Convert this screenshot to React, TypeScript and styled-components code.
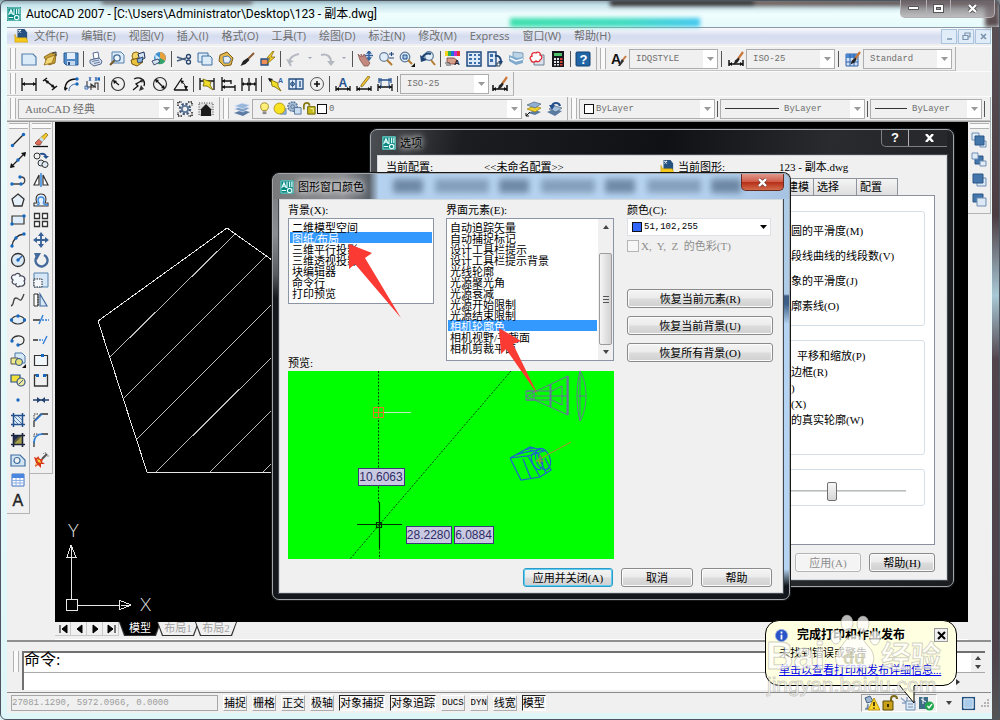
import React from "react";
import styled, { createGlobalStyle, css } from "styled-components";

const song = `"Liberation Serif", "Noto Sans CJK SC", serif`;
const ui = `"Open Sans", "Noto Sans CJK SC", sans-serif`;
const title = `Roboto, "Noto Sans CJK SC", sans-serif`;
const mono = `"Liberation Mono", "Noto Sans CJK SC", monospace`;

const GlobalStyle = createGlobalStyle`
  * { box-sizing: border-box; }
  html, body { margin: 0; padding: 0; }
  body { font: 11px/16px ${song}; color: #000; background: #dff3f6; overflow-x: hidden; }
  button, select, input { font: inherit; color: inherit; margin: 0; padding: 0; }
  button { border: 0; background: none; display: flex; align-items: center; justify-content: center; white-space: nowrap; }
  svg { display: block; flex: none; }
`;

/* ---------- icons ---------- */

const N = "#1c2f55";
const B = "#2f62a8";
const dot = (x: number, y: number) => <circle cx={x} cy={y} r="1.7" fill="#1769c0" key={`${x}-${y}`} />;
const K = "#111";
const line = (d: string, stroke = K, w = 1.3) => <path d={d} stroke={stroke} strokeWidth={w} fill="none" />;
const arrowEnds = (y: number) => <path d={`M1 ${y}l3-2v4zM15 ${y}l-3-2v4z`} fill={K} />;
const brush = <><path d="M15 1l-5 7" stroke="#c9783a" strokeWidth="2.2" /><path d="M10.500 6.500L7 9.500l-1.500 4 4-2 2-3z" fill="#222" /></>;
const glyphA = (x: number, y: number, s: number, fill = K) => (
  <text x={x} y={y} fontSize={s} fontFamily="Liberation Sans, sans-serif" fontWeight="700" fill={fill}>A</text>
);

const icons: Record<string, React.ReactNode> = {
  app: <><rect width="16" height="16" fill="#0c8a83" /><path d="M1 1h14v14H1z" fill="none" stroke="#bfe6e2" strokeWidth=".8" /><path d="M2 9l2.500-6L7 9M3 7h3M8 2v7M11 2v6M13.500 2v6M8.500 12a2.500 2.500 0 1 0 5 0 2.500 2.500 0 1 0-5 0M2 12h5" stroke="#e9fffd" strokeWidth="1.300" fill="none" /></>,
  doc: <><path d="M4 0h8l3 4v8H4z" fill="#26507f" /><path d="M5 1l3 3M8 1L5 4" stroke="#fff" strokeWidth="1.200" /><path d="M1 6l2 4h11l2 5H1z" fill="#f4c91c" stroke="#c79500" strokeWidth=".6" /></>,
  fresh: <path d="M1 3h11l3 3v8H1z" fill="#dcebf8" stroke="#5481ae" strokeWidth="1.200" />,
  open: <><path d="M2 6L9 2l5 1-1 9-6 2z" fill="#caa23a" stroke="#7c5b12" strokeWidth=".8" /><path d="M2 14l3-7 8-3-3 8z" fill="#f3d675" stroke="#8d6a18" strokeWidth=".8" /><path d="M10 2l4-1v4" stroke="#333" fill="none" /></>,
  save: <><path d="M1 2h14v12H3l-2-2z" fill="#4f8ac6" stroke="#2b5c93" /><path d="M4 2h8v6H4z" fill="#e3eefa" /><path d="M4 10h8v4H4z" fill="#c3d8ee" /><path d="M5 11h2v3H5z" fill="#234d80" /></>,
  print: <><path d="M5 2l5-1 1 6-5 1z" fill="#fff" stroke="#4a5f86" strokeWidth=".9" /><path d="M2 9l9-2 3 3-1 3-7 2-4-3z" fill="#d4deec" stroke="#4a5f86" strokeWidth=".9" /><path d="M4 10.500l7-1.500M6 12.500l6-1.500" stroke="#4e6794" strokeWidth=".8" /></>,
  preview: <><path d="M3 1h9l3 3v8H3z" fill="#dcebf8" stroke="#5481ae" /><circle cx="8" cy="7" r="3.200" fill="#eef6fd" stroke="#446c98" strokeWidth="1.300" /><path d="M5.500 9.500L1 14" stroke="#7a5a2a" strokeWidth="2" /></>,
  publish: <><circle cx="6" cy="5" r="4" fill="#f4d56a" stroke="#8a6a10" /><path d="M8 3l6-2 1 6-5 3z" fill="#d7e6f6" stroke={N} /><path d="M1 9l7-2 5 4-6 4-5-2z" fill="#e9c33b" stroke="#7b5b12" /><path d="M7 8l6-2-1 5-4 1z" fill="#88b3df" stroke={N} strokeWidth=".8" /></>,
  globe: <><circle cx="9" cy="7" r="6" fill="#3d8fcf" /><path d="M9 1a6 6 0 0 1 5 9L9 7z" fill="#e9a13b" /><path d="M9 7l5 3a6 6 0 0 1-7 3z" fill="#35a56a" /><path d="M4 3l5 4-4 4z" fill="#cfe7fa" /><path d="M1 10l6-2 2 3-6 3z" fill="#d6e2f0" stroke={N} strokeWidth=".8" /></>,
  cut: <><path d="M1 6l9 3M1 10l9-3" stroke="#47617f" strokeWidth="1.500" /><circle cx="12.500" cy="5.500" r="2" fill="none" stroke="#26446d" strokeWidth="1.300" /><circle cx="12.500" cy="11" r="2" fill="none" stroke="#26446d" strokeWidth="1.300" /></>,
  copy: <><path d="M1 2h10v9H1z" fill="#dcebf8" stroke="#3e6fa0" /><path d="M5 5h8l2 2v7H5z" fill="#dcebf8" stroke="#3e6fa0" /></>,
  paste: <><path d="M2 4l7-3 6 6-2 7-7 1-5-5z" fill="#e2b74b" stroke="#7e5b16" /><path d="M5 6l5-1 3 3-2 4-5 0z" fill="#e4eefa" stroke={B} strokeWidth=".8" /></>,
  match: <><path d="M15 2L8 9" stroke="#8a5a34" strokeWidth="2" /><path d="M8.500 7l2 2-4 4-5 2 2.500-5z" fill="#222" /></>,
  bedit: <><path d="M1 8h7v6H1z" fill="#f08c55" stroke="#1e4d86" strokeWidth="1.300" /><path d="M13 0L7 7h3l-3 6 8-7h-4l3-6z" fill="#f7d02e" stroke="#7d5d00" strokeWidth=".7" /></>,
  undo: <><path d="M6 15C3 11 4 5 14 3" stroke="#b4b9c1" strokeWidth="2" fill="none" /><path d="M1 8l3 5 5-3z" fill="#b4b9c1" /></>,
  redo: <><path d="M2 4c6-2 10 2 10 7" stroke="#b4b9c1" strokeWidth="2" fill="none" /><path d="M8 10h8l-4 5z" fill="#b4b9c1" /></>,
  tiny: <path d="M6 6h4l-2 2z" fill="#9aa3b5" />,
  pan: <><path d="M1 3l3 3 0-3 2 3 1-3 2 4 4 5-2 3H7L3 9z" fill="#c48a80" stroke="#8c5a52" strokeWidth=".8" /><path d="M12 0v9M8 4.500h8M12 0l-1.500 2h3zM12 9l-1.500-2h3z" stroke="#33629e" strokeWidth="1.400" /></>,
  zoom: <><circle cx="6" cy="6" r="4.300" fill="#e0edf9" stroke="#667f9c" strokeWidth="1.200" /><path d="M9 9l5 5" stroke="#b0792c" strokeWidth="2" /><path d="M11 3h5M13.500 1v4M11 7h5" stroke="#224a80" strokeWidth="1.200" /></>,
  zoomwin: <><circle cx="6" cy="6" r="4.800" fill="#e0edf9" stroke="#5b7796" strokeWidth="1.200" /><path d="M4 4h4v4H4z" fill="#a8c8e8" stroke="#20508c" /><path d="M9 9l4 4" stroke="#b0792c" strokeWidth="2" /><path d="M16 12v4h-4z" fill={K} /></>,
  zoomprev: <><circle cx="9" cy="5" r="4.300" fill="#e0edf9" stroke="#5b7796" strokeWidth="1.200" /><path d="M11 9l4 5" stroke="#b0792c" strokeWidth="2" /><path d="M2 7c2-4 6-5 9-4" stroke="#1e4476" strokeWidth="2.200" fill="none" /><path d="M0 4l1 7 6-2z" fill="#1e4476" /></>,
  props: <><path d="M0 0h3v5H0z" fill="#f2d21a" /><path d="M3 0h3v5H3z" fill="#35b34a" /><path d="M6 0h3v5H6z" fill="#1e6fe0" /><path d="M9 0h3v5H9z" fill="#c22bd0" /><path d="M12 0h3v5h-3z" fill="#e0312a" /><path d="M2 7h7l4 3-2 3H6L2 11z" fill="#d79f8c" stroke="#75453a" strokeWidth=".8" /><path d="M0 12h5M1 14h5" stroke="#555" />{glyphA(9, 14, 8, "#223")}</>,
  dcenter: <><path d="M1 1h14v14H1z" fill="#dce9f7" stroke="#214a80" strokeWidth="1.500" /><path d="M3 3h3v2H3zM3 7h3v2H3zM3 11h3v2H3zM8 3h2v2H8zM12 3h2v2h-2zM8 7h2v2H8zM12 7h2v2h-2zM8 11h2v2H8zM12 11h2v2h-2z" fill="#3b6dab" /></>,
  palettes: <><path d="M1 1h8v14H1z" fill="#dce9f7" stroke="#214a80" strokeWidth="1.400" /><path d="M3 3h3v3H3zM3 8h3v3H3z" fill="#3b6dab" /><path d="M8 5c4-1 6 2 6 6" stroke="#1e4476" strokeWidth="2" fill="none" /><path d="M11 10h5l-2 4z" fill="#1e4476" /><path d="M10 12h3v3h-3z" fill="#fff" stroke="#345" /></>,
  sheets: <><path d="M5 1l10 1v7L5 8z" fill="#bcd4e8" stroke="#6c8dae" strokeWidth=".8" /><path d="M1 4l8 3 6-1v6l-7 2-7-4z" fill="#7fa9cd" /><path d="M2 7l6 3 7-2" stroke="#f2f8fd" strokeWidth="1.500" fill="none" /></>,
  markup: <><path d="M5 4h10v10H5z" fill="#d9e2ec" stroke="#6f8093" /><path d="M2 9c-2-2 0-4 1-4-1-3 2-4 4-3 2-2 5 0 4 2 3 1 2 4 0 5 0 2-3 2-4 1-2 2-5 1-5-1z" fill="#fff" stroke="#e2242c" strokeWidth="1.300" /></>,
  calc: <><path d="M2 0h12v16H2z" fill="#15171c" /><path d="M4 2h8v3H4z" fill="#4cc06a" /><path d="M4 7h2v2H4zM7 7h2v2H7zM4 10h2v2H4zM7 10h2v2H7zM4 13h2v1.500H4zM7 13h2v1.500H7z" fill="#e8e8e8" /><path d="M10 7h2.500v2H10zM10 10h2.500v2H10zM10 13h2.500v1.500H10z" fill="#d9443b" /></>,
  help: <><rect x="1" y="1" width="14" height="14" rx="1" fill="#1f65a8" stroke="#15406e" /><text x="4.500" y="13" fontSize="13" fontWeight="700" fontFamily="Liberation Sans, sans-serif" fill="#fff">?</text></>,
  textstyle: <>{glyphA(0, 13, 14)}<path d="M15 5l-4 5" stroke="#c9783a" strokeWidth="2" /><path d="M11 8l2 2-4 5-2 0z" fill="#333" /></>,
  dimstyle: <>{brush}{line("M1 9v6M15 9v6M1 13h14", K, 1.500)}{arrowEnds(13)}</>,
  tablestyle: <><path d="M1 3h12v12H1z" fill="#cfe1f6" stroke="#2f62a8" /><path d="M1 3h12v4H1z" fill="#4a86d0" /><path d="M5 3v12M9 3v12M1 11h12" stroke="#2f62a8" />{brush}</>,

  dlinear: <>{line("M1 2v13M15 2v13M1 8h14")}{arrowEnds(8)}</>,
  daligned: <>{line("M1 5l4-3M10 14l5-4M3 4l10 8", K, 1.500)}<path d="M3 4l4 1-2 3zM13 12l-4-1 2-3z" fill={K} /></>,
  darc: <>{line("M2 14C2 7 6 3 13 3")}{line("M6 15c0-4 2-7 8-7", "#3d6db0", 1)}{dot(14, 3)}{dot(14, 8)}<path d="M1 11l1 4 3-3z" fill={K} /></>,
  dord: <>{line("M3 5v6h9M7 14V8l4 3V7l3 0v7", "#333", 1.100)}<path d="M5 1l2 4M7 1L5 5M11 1l2 4M13 1l-2 4" stroke="#3d6db0" /><path d="M1 10h3v3H1z" fill="none" stroke="#3d6db0" />{dot(15, 3)}</>,
  dradius: <><circle cx="8" cy="8" r="6.500" fill="none" stroke="#333" strokeWidth="1.200" />{line("M4 5l5 4")}<path d="M3 4l4 1-3 3z" fill={K} /></>,
  djog: <>{line("M3 3c6-3 12 1 10 7M2 14l5-4-2-2 7-4")}<path d="M13 3l-4 1 2 3zM10 9l-2 6 5-2z" fill="#333" /></>,
  ddia: <><circle cx="8" cy="8" r="6.500" fill="none" stroke="#333" strokeWidth="1.200" />{line("M4 4l8 8")}<path d="M3 3l4 1-3 3zM13 13l-4-1 3-3z" fill={K} /></>,
  dang: <>{line("M1 14h14M1 14L9 2")}{line("M8 5c3 2 5 5 5 9", K, 1)}<path d="M7 4l4 1-2 3zM13 14l-2-4h4z" fill={K} /></>,
  quick: <>{line("M1 2v12M15 2v12M1 5h14")}<path d="M4 3l8 3-1 3 3 5-6-4-4 0 1-3z" fill="#f0dc2a" stroke="#6f6200" strokeWidth=".8" /></>,
  baseline: <>{line("M2 1v14M11 4v4M15 9v6M2 5h9M2 11h13")}<path d="M2 5l3-2v4zM2 11l3-2v4z" fill={K} /></>,
  cont: <>{line("M1 2v13M8 2v13M15 2v13M1 8h14")}<path d="M8 8l-2-2v4zM8 8l2-2v4zM1 8l2-2v4zM15 8l-2-2v4z" fill={K} /></>,
  leader: <>{line("M2 3l5 5h4")}<path d="M1 2l5 1-3 3z" fill={K} /><path d="M4 4l7 3v3l3 5-6-4-3-1z" fill="#f0dc2a" stroke="#6f6200" strokeWidth=".8" />{glyphA(11, 7, 7, B)}</>,
  tol: <><path d="M1 3h14v10H1z" fill="#dbe8f7" stroke="#234d80" strokeWidth="1.300" />{line("M8 3v10M12 5v6", "#234d80")}<circle cx="4.500" cy="8" r="1.800" fill="none" stroke="#234d80" />{line("M4.500 4.500v7M2 8h5", "#234d80", 0.8)}</>,
  center: <><circle cx="8" cy="8" r="6.500" fill="none" stroke="#555" />{line("M8 5v6M5 8h6", K, 1.600)}</>,
  dedit: <>{line("M1 10v5M15 10v5M1 13h14")}{arrowEnds(13)}{glyphA(3.500, 11, 12, "#24508d")}</>,
  dtedit: <>{line("M1 10v5M15 10v5M1 13h14")}{arrowEnds(13)}<path d="M14 1L7 10l-2 1 0-2 7-9z" fill="#f0c52d" stroke="#7a5b12" strokeWidth=".7" /></>,
  dupd: <>{line("M2 2v5M14 2v5M2 4h12", "#24508d")}{line("M1 8v7M15 8v7M1 11h14", K)}{arrowEnds(11)}{line("M4 2v10M12 2v10", "#24508d", 1)}</>,

  gear: <><path d="M1 5V1h4M11 1h4v4M15 11v4h-4M5 15H1v-4" fill="none" stroke="#222" strokeDasharray="1.500 1" strokeWidth="1.500" /><circle cx="8" cy="8" r="5" fill="none" stroke="#445a78" strokeWidth="2.500" strokeDasharray="2.200 1.700" /><circle cx="8" cy="8" r="4" fill="#5d7698" /><circle cx="8" cy="8" r="2.200" fill="#f0f0f0" /></>,
  home: <><path d="M1 2h14v12H1z" fill="#ddd" stroke="#777" strokeDasharray="1 1.500" strokeWidth="1.500" /><path d="M2 9l6-6 6 6h-1v6H3V9z" fill="#1a1a1a" /></>,
  layers: <><path d="M0 12l8-3 8 2-7 4z" fill="#5b7ba3" /><path d="M0 8l8-3 8 2-7 4z" fill="#7d9ec4" stroke="#eef" strokeWidth=".6" /><path d="M0 5l8-3 8 2-7 4z" fill="#9ab9da" stroke="#eef" strokeWidth=".6" /></>,
  bulb: <><path d="M8 2c5 0 5 5 2.500 8H5.500C3 7 3 2 8 2z" fill="#fff07a" stroke="#a08820" /><path d="M6 11h4v3H6z" fill="#8a8a8a" /></>,
  sun: <><path d="M9 8h6v6H9z" fill="#8fb3d8" stroke="#6b8eb5" /><circle cx="8" cy="8" r="5.800" fill="#f9e21f" stroke="#b19a12" /></>,
  snow: <><circle cx="6" cy="6" r="5" fill="#a7bbd2" stroke="#58779d" strokeDasharray="2 1" strokeWidth="1.500" /><circle cx="6" cy="6" r="2" fill="none" stroke="#58779d" /><path d="M8 7h7v7H8z" fill="#c9dcf0" stroke="#58779d" /></>,
  unlock: <><path d="M2 9V5a3 3 0 0 1 6 0" fill="none" stroke="#857710" strokeWidth="1.800" /><path d="M6 6h8v8H6z" fill="#c4b91f" stroke="#6f6508" /><path d="M9 8h3v4" stroke="#f9f3a0" fill="none" /></>,
  laycur: <><path d="M3 12l7-3 6 2-6 3z" fill="#5b7ba3" /><path d="M2 8l7-3 7 2-6 4z" fill="#f1cf2c" stroke="#9b8110" strokeWidth=".7" /><path d="M2 4l7-3 7 2-6 4z" fill="#8fb0d4" stroke="#456" strokeWidth=".6" /><path d="M1 15l4-4M1 15v-3M1 15h3" stroke={K} /></>,
  layprev: <><path d="M1 11l7-3 8 2-7 5z" fill="#5b7ba3" /><path d="M3 8l6-3 7 2-6 4z" fill="#a3c0df" stroke="#456" strokeWidth=".6" /><path d="M14 5c-1-4-7-4-8 0" stroke="#24508d" strokeWidth="2.200" fill="none" /><path d="M3 4h6l-3 5z" fill="#24508d" /></>,

  line: <>{line("M2 14L14 2", "#222", 1.300)}{dot(2.500, 13.500)}{dot(13.500, 2.500)}</>,
  xline: <>{line("M1 15L15 1", "#222", 1.300)}{dot(8, 8)}<path d="M0 16l1-5 4 4zM16 0l-5 1 4 4z" fill={K} /></>,
  pline: <>{line("M2 12h9c5 0 5-7 0-7", "#444", 1.300)}{dot(2, 12)}{dot(11, 12)}{dot(10, 5)}</>,
  polygon: <path d="M8 2l6 5-2 7H4L2 7z" fill="#e6f0f8" stroke="#333" strokeWidth="1.300" />,
  rect: <><path d="M2 4h12v8H2z" fill="#dfeefa" stroke="#333" strokeWidth="1.200" />{dot(2, 12)}{dot(14, 4)}</>,
  arc: <>{line("M2 14C3 7 7 3 14 2", "#333")}{dot(2, 14)}{dot(6, 6)}{dot(14, 2)}</>,
  circle: <><circle cx="8" cy="8" r="6.500" fill="#dceaf6" stroke="#333" strokeWidth="1.300" />{line("M8 8l4-4", B, 1.500)}{dot(8, 8)}</>,
  cloud: <path d="M3 8C0 6 2 2 5 3c2-3 6-1 5 1 4-1 6 3 4 5 2 3-1 6-4 5-2 2-5 0-4-2-3 1-5-2-3-4z" fill="#f3f8fc" stroke="#445" strokeWidth="1.200" />,
  spline: line("M1 14c4-1 1-8 5-8s4 7 8-4", "#444"),
  ellipse: <><ellipse cx="8" cy="8" rx="6.500" ry="4" fill="#e2eef8" stroke="#333" strokeWidth="1.200" />{dot(1.500, 8)}{dot(14.500, 8)}{dot(8, 4)}</>,
  earc: <>{line("M2 9C1 3 14 2 14 8c0 4-4 5-6 5", "#333")}{dot(2, 9)}{dot(8, 13)}</>,
  insert: <><path d="M5 1h7l3 3v7H5z" fill="#d7e8f7" stroke="#4b78a6" /><path d="M1 6h7v6H1z" fill="#f2ec8a" stroke="#555" /><circle cx="9" cy="10" r="3.500" fill="#e8e27a" stroke="#24508d" /><path d="M16 12v4h-4z" fill={K} /></>,
  block: <><path d="M1 3h9v7H1z" fill="#f2df3a" stroke="#24508d" strokeWidth="1.200" /><circle cx="11" cy="10" r="4" fill="#efe9a0" stroke="#3b5a80" strokeWidth="1.200" />{line("M9 12l4-4", "#3b5a80", 1)}</>,
  point: dot(8, 8),
  hatch: <><path d="M3 3h10v10H3z" fill="#dcebf8" /><path d="M3 7l6 6M3 3l10 10M7 3l6 6" stroke="#5481ae" /><path d="M3.500 1v14M12.500 1v14M1 3.500h14M1 12.500h14" stroke="#24508d" strokeWidth="1.500" /></>,
  gradient: <><path d="M3 3h10v10H3z" fill="#555a3c" /><path d="M13 3v10H3z" fill="#a8a04c" /><path d="M3 3h7l-7 7z" fill="#222b55" /><path d="M3.500 1v14M12.500 1v14M1 3.500h14M1 12.500h14" stroke="#1c2540" strokeWidth="1.600" /></>,
  region: <><path d="M1 3h9l5 5v6H1z" fill="#d3e5f5" stroke="#3e6fa0" strokeWidth="1.200" /><circle cx="7" cy="8.500" r="3" fill="#f0f0f0" stroke="#3e6fa0" strokeWidth="1.200" /></>,
  table: <><path d="M2 2h12v12H2z" fill="#fff" stroke="#3f72c0" /><path d="M2 2h12v4H2z" fill="#4a86e0" /><path d="M6 6v8M10 6v8M2 8.500h12M2 11h12" stroke="#8db1e2" /></>,
  mtext: <text x="2.500" y="14" fontSize="16" fontFamily="Liberation Sans, sans-serif" fill="#222" stroke="#222" strokeWidth=".4">A</text>,

  erase: <><path d="M13 1l2 2-6 7-3-3z" fill="#efc92e" stroke="#806410" strokeWidth=".7" /><path d="M6 7l3 3-2 3H4L2 11z" fill="#de6a58" stroke="#6b3b30" strokeWidth=".7" /><path d="M8 5l3 3-2 2-3-3z" fill="#c4def4" />{line("M0 14.500h15")}</>,
  copyobj: <><circle cx="4" cy="4" r="3" fill="none" stroke="#333" /><path d="M7 2c4-1 6 1 6 3" stroke="#24508d" strokeWidth="1.800" fill="none" /><path d="M10 4h6l-3 3z" fill="#24508d" /><circle cx="8" cy="11" r="3" fill="#dfeaf4" stroke="#333" /><circle cx="12" cy="12.500" r="3" fill="#dfeaf4" stroke="#333" /></>,
  mirror: <><path d="M6 3v10H1zM10 3v10h5z" fill="#fff" stroke="#333" strokeWidth="1.200" />{line("M8 1v14", "#3c8be0", 1.600)}</>,
  offset: <><path d="M1 14v-3h3c-2-4-1-9 4-9s6 5 4 9h3v3z" fill="#e8f1fa" stroke="#333" strokeWidth="1.100" />{line("M4 13c4 0 1-3 1-5 0-4 6-4 6 0 0 2-3 5 4 5", "#3c8be0", 1.400)}</>,
  array: <path d="M1.500 1.500h5v5h-5zM9.500 1.500h5v5h-5zM1.500 9.500h5v5h-5zM9.500 9.500h5v5h-5z" fill="#fff" stroke="#333" strokeWidth="1.300" />,
  move: <><path d="M8 2v12M2 8h12" stroke="#376197" strokeWidth="1.800" /><path d="M8 0l3 4H5zM8 16l3-4H5zM0 8l4-3v6zM16 8l-4-3v6z" fill="#376197" /></>,
  rotate: <><path d="M4 4.500A6 6 0 1 0 11 3" fill="none" stroke="#446a9c" strokeWidth="2.400" /><path d="M1 1h7L4 8z" fill="#446a9c" /></>,
  scale: <><path d="M1 1h14v14H1z" fill="#d6e8f8" stroke="#5481ae" /><path d="M1 7h8v8H1z" fill="#f4f8fc" stroke="#222" strokeDasharray="1.500 1" /></>,
  stretch: <><path d="M1 2h4v12H1z" fill="#fff" stroke="#333" /><path d="M7 2l7 12H7z" fill="#d6e8f8" stroke="#446a9c" strokeWidth="1.200" /><path d="M5 2v12" stroke="#222" strokeDasharray="1.500 1" /></>,
  trim: <>{line("M0 8h7")}{line("M6 12l4-9", "#2f7fd8", 1.400)}<path d="M9 8h7" stroke="#2f7fd8" strokeWidth="1.300" strokeDasharray="2 1" /></>,
  extend: <>{line("M0 8h5")}<path d="M6 8h4" stroke="#2f7fd8" strokeWidth="1.300" strokeDasharray="2 1" />{line("M10 12l4-8", "#2f7fd8", 1.400)}</>,
  breakpt: <><path d="M1.500 3.500h13v10h-13z" fill="#f2f7fb" stroke="#333" strokeWidth="1.200" /><path d="M8 2h3v3H8z" fill="#1769c0" /></>,
  breaks: <>{line("M4 3H1.500v11h13V3H12", "#333")}<path d="M3 2h3v3H3zM10 2h3v3h-3z" fill="#1769c0" /></>,
  join: <>{line("M0 8h16", "#24426f", 1.500)}<path d="M8 8L4 5v6zM8 8l4-3v6z" fill="#24426f" /></>,
  chamfer: <>{line("M1 15V9l7-7h7", "#333")}{line("M2 9l7-7", "#2f7fd8", 1.600)}<path d="M1 7V2h5" stroke="#333" strokeDasharray="1.500 1" fill="none" /></>,
  fillet: <>{line("M1 15V9M8 2h7", "#333")}{line("M1 11c0-6 3-9 9-9", "#2f7fd8", 1.600)}<path d="M1 5V2h4" stroke="#333" strokeDasharray="1.500 1" fill="none" /></>,
  explode: <><path d="M9 7l5-5" stroke="#555" strokeWidth="2.200" /><path d="M1 5l3 1 1-2 2 3 3 0-1 3 3 2-4 0 0 4-3-3-3 2 1-4z" fill="#d8391e" /><path d="M4 7l3 1 1 3-3-1zM2 12l2-1 0 2z" fill="#f9d12d" /><path d="M12 0l1 2M16 4l-2 0M10 1l1 1" stroke="#888" /></>,

  front1: <><path d="M1 1h7v7H1z" fill="#e2ecf6" stroke="#6f8fb3" /><path d="M9 9h6v6H9z" fill="#e2ecf6" stroke="#6f8fb3" /><path d="M4 4h9v9H4z" fill="#4576ab" stroke="#2b5788" /></>,
  front2: <><path d="M4 4h8v8H4z" fill="#4576ab" stroke="#2b5788" /><path d="M1 1h6v6H1zM9 9h6v5H9z" fill="#e2ecf6" stroke="#6f8fb3" /></>,
  front3: <><path d="M6 6h9v8H6z" fill="#dce8f4" stroke="#6f8fb3" /><path d="M2 2h10v9H2z" fill="#4576ab" stroke="#2b5788" /></>,
  front4: <><path d="M2 2h10v8H2z" fill="#4576ab" stroke="#2b5788" /><path d="M6 6h9v8H6z" fill="#dce8f4" stroke="#6f8fb3" /></>,

  warn: <><path d="M1 3l5-2 3 5-6 2zM4 9v5H1" fill="#9fb7d2" stroke="#43607f" /><path d="M10 3l6 12H4z" fill="#ffd52a" stroke="#a88300" strokeWidth=".8" /><path d="M10 7v4M10 12.500v1.200" stroke="#000" strokeWidth="1.400" /></>,
  lock: <><path d="M9 8V4a3 3 0 0 1 6 0" fill="none" stroke="#7c6a1a" strokeWidth="2" /><path d="M1 6h10v9H1z" fill="#c8a21a" stroke="#5c4a08" /><path d="M5 9h2v3H5z" fill="#3a2f05" /></>,
  plot: <><path d="M1 3l6 5M7 2v6M2 8h6" stroke="#8aa4c2" strokeWidth="1.500" /><path d="M6 6h9v9H6z" fill="#dce8f4" stroke="#6f8fb3" /><path d="M8 9h5M8 12h5" stroke="#6f8fb3" /></>,
  xref: <><path d="M1 2h9v12H1z" fill="#3c6c86" /><path d="M3 4l5 3M5 2v7" stroke="#fff" /><circle cx="11.500" cy="11" r="4.500" fill="#21a84d" /><path d="M9.500 11l1.500 2 3-4" stroke="#fff" strokeWidth="1.300" fill="none" /></>,
  square: <><path d="M1 1h14v14H1z" fill="#24507f" /><path d="M3 3h10v10H3z" fill="#a9cbe9" stroke="#e4f1fb" /></>,
  info: <><circle cx="8" cy="8" r="7.500" fill="#2a55c9" stroke="#8fa8df" /><path d="M8 3v2.500M8 7v6" stroke="#fff" strokeWidth="2.200" /></>,
};

const Icon = ({ name, size = 16 }: { name: string; size?: number }) => (
  <svg width={size} height={size} viewBox="0 0 16 16" aria-hidden="true">{icons[name]}</svg>
);

/* ---------- main window ---------- */

const Window = styled.div`
  position: relative;
  display: flex;
  flex-direction: column;
  min-height: 100vh;
  padding: 0 9px 7px 7px;
  overflow: hidden;
  background:
    linear-gradient(#5b5357, #4b3c42 30%, #a9c9d6 41%, #51444c 50%, #4d4249 90%, #555) right / 8px 100% no-repeat,
    linear-gradient(#eafcfd, #dff6f8);
  &::after {
    content: "";
    position: absolute;
    inset: 0;
    border: 1px solid #4b5560;
    border-radius: 6px;
    pointer-events: none;
  }
`;

const TitleBar = styled.header`
  display: flex;
  align-items: center;
  height: 27px;
  margin: 0 -9px 0 -7px;
  padding-left: 7px;
  gap: 5px;
  position: relative;
  font: 12px/16px ${title};
  background: linear-gradient(#89a3ab, #c6e2ea 5px, #effdfd 14px, #e6fbfc);
  > * { position: relative; z-index: 1; }
`;

const GlassSmear = styled.span`
  && {
    position: absolute;
    z-index: 0;
    inset: 0;
    overflow: hidden;
    filter: blur(2px);
    background:
      linear-gradient(90deg, #3fe0ad, #41dcc0 60%, #45c8ef) 63% 100% / 19% 9px no-repeat,
      linear-gradient(#5f5a5c, #5f5a5c) 12% 0 / 15% 4px no-repeat,
      linear-gradient(90deg, #2f292b, #2f292b 37%, #6b5a56 37%, #56494a) 100% 0 / 39% 6px no-repeat,
      linear-gradient(#6b6064, #574a4d) 100% 0 / 15px 100% no-repeat;
  }
`;

const TitleText = styled.h1`
  margin: 0;
  font: inherit;
`;

const Caption = styled.div`
  display: flex;
  margin: 0 5px auto auto;
  height: 18px;
  border: 1px solid #b4b0b4;
  border-top: 0;
  border-radius: 0 0 5px 5px;
  background: linear-gradient(#6a6064cc, #a39da0aa);
`;

const CaptionButton = styled.button<{ $w: number }>`
  width: ${(p) => p.$w}px;
  & + & { border-left: 1px solid #b4b0b4; }
`;

const MenuBar = styled.nav`
  display: flex;
  align-items: center;
  height: 17px;
  padding-left: 7px;
  background: linear-gradient(#fafbfe, #d4dcee 50%, #dfe4f4);
  border-top: 1px solid #8c98a4;
  font: 11px/16px ${ui};
  color: #6d6d6d;
`;

const MenuItem = styled.button`
  margin-left: 6px;
  margin-right: 7px;
`;

const MdiButton = styled.button`
  width: 16px;
  height: 15px;
  margin-left: 1px;
  border: 1px solid #a9c4dc;
  background: #e0edf8;
`;

const MdiGroup = styled.div`
  display: flex;
  margin-left: auto;
`;

const ToolRows = styled.div`
  background: #f0f0f0;
  padding-top: 2px;
  border-bottom: 1px solid #9a9a9a;
`;

const ToolRow = styled.div`
  display: flex;
  height: 25px;
  overflow: hidden;
  border-top: 1px solid #fbfbfb;
`;

const ToolBar = styled.div<{ $sep?: number }>`
  display: flex;
  align-items: center;
  padding: 0 3px 0 3px;
  border-right: 1px solid #b0b0b0;
  border-bottom: 1px solid #c4c4c4;
  --sep: ${(p) => p.$sep ?? 4}px;
`;

const Grip = styled.span<{ $flat?: boolean }>`
  flex: none;
  ${(p) =>
    p.$flat
      ? css`width: 19px; height: 6px; margin: 1px auto; border-width: 1px 0;`
      : css`width: 6px; height: 21px; margin-right: 2px; border-width: 0 1px;`}
  border-style: solid;
  border-color: #b2b2b2;
  background: #fafafa;
`;

const ToolButton = styled.button<{ $w?: number }>`
  flex: none;
  width: ${(p) => p.$w ?? 21}px;
  height: 20px;
`;

const Sep = styled.span`
  flex: none;
  width: var(--sep);
  height: 16px;
  background: linear-gradient(#555, #555) center / 1px 100% no-repeat;
`;

const ComboBox = styled.div<{ $w: number; $white?: boolean }>`
  display: flex;
  align-items: center;
  width: ${(p) => p.$w}px;
  height: ${(p) => (p.$white ? 18 : 20)}px;
  padding-left: 4px;
  border: 1px solid ${(p) => (p.$white ? "#dde1e6" : "#adadad")};
  background: ${(p) => (p.$white ? "#fff" : "#f0f0f0")};
  color: ${(p) => (p.$white ? "#000" : "#6f6f6f")};
  flex: none;
`;

const ComboSelect = styled.select<{ $mono?: boolean }>`
  flex: 1;
  min-width: 0;
  height: 100%;
  border: 0;
  padding-left: 2px;
  appearance: none;
  background: none;
  font: ${(p) => (p.$mono ? `9px/14px ${mono}` : `11px/16px ${song}`)};
`;

const Arrow = styled.span<{ $dark?: boolean }>`
  display: flex;
  align-items: center;
  justify-content: center;
  width: 14px;
  height: 100%;
  background: #fff;
  color: ${(p) => (p.$dark ? "#000" : "#9a9a9a")};
`;

const LinePreview = styled.span<{ $w: number }>`
  flex: none;
  width: ${(p) => p.$w}px;
  height: 1px;
  margin-right: 3px;
  background: #333;
`;

const Swatch = styled.span<{ $c: string }>`
  flex: none;
  width: 10px;
  height: 10px;
  border: 1px solid #111;
  background: ${(p) => p.$c};
`;

type ComboProps = { w: number; label: string; value: string; mono?: boolean; white?: boolean; children?: React.ReactNode };
const Combo = ({ w, label, value, mono: m, white, children }: ComboProps) => (
  <ComboBox $w={w} $white={white}>
    {children}
    <ComboSelect aria-label={label} $mono={m}><option>{value}</option></ComboSelect>
    <Arrow $dark={white}>
      <svg width="7" height="4" viewBox="0 0 7 4"><path d="M0 0h7L3.500 4z" fill="currentColor" /></svg>
    </Arrow>
  </ComboBox>
);

const Tools = ({ names }: { names: string[] }) => (
  <>
    {names.map((n, i) =>
      n === "|" ? <Sep key={i} /> : (
        <ToolButton key={i} aria-label={n} $w={n === "tiny" ? 13 : 21}><Icon name={n} /></ToolButton>
      )
    )}
  </>
);

const Body = styled.div`
  flex: 1;
  display: flex;
  background: #f0f0f0;
`;

const SideBar = styled.div`
  display: flex;
  align-items: flex-start;
  flex: none;
`;

const ToolColumn = styled.div`
  display: flex;
  flex-direction: column;
  align-items: center;
  width: 23px;
  padding-bottom: 3px;
  border: solid #b4b4b4;
  border-width: 0 1px 1px 0;
`;

const Workspace = styled.main`
  flex: 1;
  min-width: 0;
  display: flex;
  flex-direction: column;
  margin-left: 2px;
`;

const Canvas = styled.div`
  flex: 1;
  min-height: 500px;
  background: #000;
  overflow: hidden;
`;

const LayoutTabs = styled.div`
  display: flex;
  height: 18px;
  align-items: flex-start;
  border-bottom: 1px solid #fff;
`;

const NavButton = styled.button`
  width: 16px;
  height: 14px;
  border-right: 1px solid #c9c9c9;
  border-bottom: 1px solid #c9c9c9;
`;

const TabShape = styled.button<{ $on?: boolean }>`
  height: 14px;
  width: 42px;
  margin-right: -4px;
  padding: 0 1px 1px;
  background: #333;
  color: ${(p) => (p.$on ? "#fff" : "#a2a2a2")};
  clip-path: polygon(0 0, 100% 0, calc(100% - 5px) 100%, 5px 100%);
  > span {
    width: 100%;
    height: 100%;
    line-height: 13px;
    background: ${(p) => (p.$on ? "#000" : "#f0f0f0")};
    clip-path: polygon(0 0, 100% 0, calc(100% - 5px) 100%, 5px 100%);
  }
`;

const CommandPanel = styled.section`
  display: flex;
  height: 53px;
  padding: 9px 6px 2px 6px;
  gap: 1px;
  background: #f0f0f0;
  border-top: 2px solid #8f8f8f;
  border-bottom: 1px solid #8a8a8a;
`;

const CommandBox = styled.div`
  flex: 1;
  display: flex;
  flex-direction: column;
  border: solid #707070;
  border-width: 2px 0 0 2px;
  background: #fff;
`;

const CommandHistory = styled.div`
  display: flex;
  justify-content: space-between;
  height: 20px;
  border-bottom: 1px solid #a9a9a9;
  font: 16px/14px ${song};
`;

const CommandInput = styled.input`
  width: 100%;
  height: 17px;
  border: 0;
  outline: 0;
  background: transparent;
`;

const ScrollPair = styled.div`
  display: flex;
  flex-direction: column;
  justify-content: space-around;
  align-items: center;
  width: 14px;
  background: #f0f0f0;
`;

const InputRow = styled.div`
  display: flex;
  align-items: center;
`;

const ScrollEnd = styled.button`
  width: 30px;
  height: 17px;
  justify-content: flex-start;
  background: #f0f0f0;
`;

const StatusBar = styled.footer`
  display: flex;
  align-items: center;
  gap: 5px;
  height: 20px;
  padding: 0 2px 0 4px;
  background: #f0f0f0;
`;

const Coords = styled.output`
  width: 207px;
  height: 16px;
  border: 1px solid #a6a6a6;
  font: 9px/14px ${mono};
  color: #9c9c9c;
  white-space: nowrap;
`;

const Toggle = styled.button<{ $on?: boolean }>`
  height: 16px;
  border: 1px solid;
  border-color: ${(p) => (p.$on ? "#222 #fff #fff #222" : "#fff #adadad #adadad #fff")};
  background: ${(p) => (p.$on ? "#f7f5f5" : "#f0f0f0")};
`;

const ModeToggle = styled(Toggle)`
  font: 9px/14px ${mono};
`;

const Tray = styled.div`
  display: flex;
  gap: 2px;
  margin-left: auto;
  padding: 0 2px;
  border: 1px solid;
  border-color: #a0a0a0 #fff #fff #a0a0a0;
`;

const StatusEnd = styled.div`
  display: flex;
  align-items: center;
  gap: 2px;
`;

/* ---------- dialogs ---------- */

const Dialog = styled.section<{ $x: number; $y: number; $w: number; $front?: boolean }>`
  position: absolute;
  left: ${(p) => p.$x}px;
  top: ${(p) => p.$y}px;
  width: ${(p) => p.$w}px;
  display: flex;
  flex-direction: column;
  padding: 0 6px 6px;
  border: 1px solid #a2a6ab;
  border-radius: 7px;
  box-shadow: 0 0 0 1px #15181b;
  background: ${(p) =>
    p.$front
      ? "linear-gradient(#aecbe8 0 120px, #3d5e86 122px 130px, #b5d4f3 150px 395px, #10161c 412px) right / 6px 100% no-repeat, linear-gradient(#77797b, #8b8e91 60px, #5a5d60 100px, #14181c 124px)"
      : "linear-gradient(100deg, #4b4e52, #1c1d20 14%, #101114 45%, #2a2b2f 70%, #1b1c1f)"};
`;

const DialogTitle = styled.header<{ $front?: boolean }>`
  position: relative;
  display: flex;
  align-items: center;
  height: 25px;
  gap: 4px;
  padding-left: 5px;
  font: 11px/16px ${ui};
  overflow: hidden;
  ${(p) =>
    p.$front &&
    css`
      margin: 0 -6px;
      padding-left: 7px;
      border-radius: 6px 6px 0 0;
      background: linear-gradient(90deg, #77797b, #8d8f92 70px, #5a6068 96px, #b4d2ef 106px, #b8d5f2 80%, #a6c4e2);
    `}
`;

const Haze = styled.span`
  position: absolute;
  left: 120px;
  top: 5px;
  width: 350px;
  height: 14px;
  filter: blur(3px);
  background: repeating-linear-gradient(90deg, #40587499 0 30px, transparent 30px 42px, #4058746b 42px 96px, transparent 96px 106px);
`;

const DialogName = styled.h2`
  margin: 0;
  font: inherit;
  text-shadow: 0 0 5px #ffffffcc, 0 0 8px #ffffffaa, 0 0 10px #ffffff88;
`;

const DarkCaption = styled(Caption)`
  margin-right: -4px;
  height: 17px;
  border-color: #7d7f83;
  background: #2a2b2eaa;
  color: #fff;
  font: 700 13px/14px "Liberation Sans", sans-serif;
`;

const RedClose = styled.button`
  position: relative;
  width: 43px;
  height: 17px;
  margin: 0 5px auto auto;
  border: 1px solid #6b2a22;
  border-top: 0;
  border-radius: 0 0 5px 5px;
  background: linear-gradient(#e0998c, #cf5c48 48%, #b52c16 50%, #d26b4a);
`;

const DialogBody = styled.div`
  border: 1px solid #d6dade;
  outline: 1px solid #43484e;
  background: #f0f0f0;
`;

const ConfigRow = styled.div`
  display: flex;
  align-items: center;
  height: 22px;
  padding-left: 8px;
`;

const Field = styled.span<{ $w?: number }>`
  width: ${(p) => (p.$w ? `${p.$w}px` : "auto")};
  margin-right: 4px;
  white-space: nowrap;
`;

const TabStrip = styled.div`
  display: flex;
  justify-content: flex-end;
  height: 17px;
  padding-right: 48px;
`;

const OptionTab = styled.button<{ $w: number }>`
  width: ${(p) => p.$w}px;
  justify-content: ${(p) => (p.$w > 50 ? "flex-end" : "flex-start")};
  padding: 0 4px 0 3px;
  border: solid #8f949c;
  border-width: 1px 1px 0 0;
  background: linear-gradient(#f4f4f4, #dedede);
`;

const OptionPanel = styled.div`
  margin: 0 11px 8px 8px;
  padding: 15px 9px 38px;
  border: 1px solid #8b8fa0;
  background: #fff;
  display: flex;
  flex-direction: column;
  gap: 14px;
`;

const Group = styled.fieldset<{ $h: number; $row: number }>`
  min-height: ${(p) => p.$h}px;
  margin: 0;
  padding: 7px 18px 0 394px;
  border: 1px solid #d5dfe8;
  border-radius: 3px;
  line-height: ${(p) => p.$row}px;
`;

const GroupLine = styled.div<{ $in?: boolean }>`
  padding-left: ${(p) => (p.$in ? 6 : 0)}px;
  height: 1lh;
`;

const SliderGroup = styled(Group)`
  padding: 11px 18px 0 200px;
`;

const Slider = styled.input`
  display: block;
  width: 100%;
  height: 20px;
  appearance: none;
  background: linear-gradient(#a9acac, #e4e8e8) center / 100% 2px no-repeat;
  &::-webkit-slider-thumb {
    appearance: none;
    width: 10px;
    height: 19px;
    border: 1px solid #6f6f6f;
    border-radius: 2px;
    background: linear-gradient(#f6f6f6, #d6d6d6);
  }
`;

const Buttons = styled.div`
  display: flex;
  justify-content: flex-end;
  gap: 8px;
  padding: 0 11px 7px 0;
`;

const PushButton = styled.button<{ $w?: number; $hot?: boolean }>`
  width: ${(p) => (p.$w ? `${p.$w}px` : "100%")};
  height: 19px;
  border: 1px solid ${(p) => (p.$hot ? "#2c9bc9" : "#8a8a8a")};
  border-radius: 3px;
  background: linear-gradient(#f4f4f4, #ebebeb 48%, #dcdcdc 52%, #d0d0d0);
  box-shadow: inset 0 0 0 1px ${(p) => (p.$hot ? "#5ccdf0" : "#fbfbfb")};
  &:disabled { color: #8d8d8d; border-color: #b5b5b5; background: #f4f4f4; }
`;

const ColorBody = styled(DialogBody)`
  padding: 2px 0 0 8px;
`;

const ColorLayout = styled.div`
  display: grid;
  grid-template-columns: 326px 146px;
  gap: 13px;
`;

const Lists = styled.div`
  display: flex;
  justify-content: space-between;
`;

const Column = styled.div<{ $w?: number }>`
  display: flex;
  flex-direction: column;
  width: ${(p) => (p.$w ? `${p.$w}px` : "auto")};
`;

const Label = styled.label`
  display: block;
  line-height: 16px;
  height: 16px;
`;

const PreviewLabel = styled(Label)`
  margin-top: auto;
`;

const ListFrame = styled.div<{ $gap?: number }>`
  display: flex;
  border: 1px solid #8b95a6;
  background: #fff;
  margin-bottom: ${(p) => p.$gap ?? 0}px;
`;

const ListBox = styled.select<{ $h: number }>`
  flex: 1;
  min-width: 0;
  height: ${(p) => p.$h}px;
  padding: 2px 1px;
  border: 0;
  outline: 0;
  overflow: hidden;
  scrollbar-width: none;
  background: transparent;
  option {
    display: flex;
    align-items: center;
    height: 11px;
    min-height: 0;
    padding: 0 0 0 2px;
    overflow: visible;
  }
  option:checked { background: linear-gradient(#3399ff, #3399ff); color: #fff; }
`;

const ScrollBar = styled.div`
  display: flex;
  flex-direction: column;
  align-items: center;
  justify-content: space-between;
  width: 15px;
  padding: 6px 0;
  background: #f0f0f0;
`;

const ScrollThumb = styled.span`
  display: flex;
  align-items: center;
  justify-content: center;
  width: 13px;
  height: 92px;
  margin-top: 18px;
  border: 1px solid #9c9c9c;
  border-radius: 2px;
  background: linear-gradient(90deg, #f5f5f5, #d2d2d2);
`;

const CheckRow = styled.label`
  display: flex;
  align-items: center;
  gap: 2px;
  height: 12px;
  margin: 4px 0 37px;
  color: #8d8d8d;
  white-space: pre;
  input {
    appearance: none;
    width: 12px;
    height: 12px;
    border: 1px solid #b5b5b5;
    background: #f6f6f6;
  }
`;

const ResetButtons = styled.div`
  display: grid;
  gap: 8px;
`;

const ColorButtons = styled(Buttons)`
  padding: 9px 10px 5px 0;
`;

const Annotations = styled.svg`
  position: absolute;
  left: 0;
  top: 0;
  pointer-events: none;
`;

/* ---------- notification ---------- */

const Balloon = styled.aside`
  position: absolute;
  right: 43px;
  bottom: 34px;
  width: 192px;
  height: 66px;
  padding: 6px 8px 0 9px;
  border: 1px solid #000;
  border-radius: 14px;
  background: #ffffe1;
`;

const BalloonHead = styled.div`
  display: flex;
  align-items: center;
  gap: 9px;
  height: 16px;
  font-size: 12px;
  font-weight: 700;
  white-space: nowrap;
`;

const CloseNote = styled.button`
  width: 14px;
  height: 14px;
  margin-left: auto;
  border: 1px solid #999;
  background: #f0f0f0;
`;

const BalloonText = styled.p`
  margin: 3px 0 0 4px;
  white-space: nowrap;
  line-height: 14px;
  a { color: #0000ee; }
`;

const Tail = styled.svg`
  position: absolute;
  left: 133px;
  top: 63px;
`;

const Watermark = styled.svg`
  position: absolute;
  right: 48px;
  bottom: 18px;
  pointer-events: none;
`;

const leftTools = ["line", "xline", "pline", "polygon", "rect", "arc", "circle", "cloud", "spline", "ellipse", "earc", "insert", "block", "point", "hatch", "gradient", "region", "table", "mtext"];
const editTools = ["erase", "copyobj", "mirror", "offset", "array", "move", "rotate", "scale", "stretch", "trim", "extend", "breakpt", "breaks", "join", "chamfer", "fillet", "explode"];
const menus = ["文件(F)", "编辑(E)", "视图(V)", "插入(I)", "格式(O)", "工具(T)", "绘图(D)", "标注(N)", "修改(M)", "Express", "窗口(W)", "帮助(H)"];
const backgrounds = ["二维模型空间", "图纸/布局", "三维平行投影", "三维透视投影", "块编辑器", "命令行", "打印预览"];
const elements = ["自动追踪矢量", "自动捕捉标记", "设计工具栏提示", "设计工具栏提示背景", "光线轮廓", "光源聚光角", "光源衰减", "光源开始限制", "光源结束限制", "相机轮廓色", "相机视野/平截面", "相机剪裁平面"];

const CadDrawing = () => (
  <svg width="217" height="500" viewBox="55 122 217 500" fill="none" stroke="#e6e6e6" shapeRendering="crispEdges">
    <path d="M272 260L227 228 98 321 147 472H272" />
    <path d="M235 234L110 357M266 256L123 399M272 304L137 439M272 357L156 472M272 410L210 472M272 463L263 472" stroke="#bdbdbd" />
    <path d="M66 599h11v11H66zM71 599V557M77 605h42" />
    <path d="M71 545l-4 12h9zM131 605l-12-5v10zM71 548v9M121 605h8" />
    <g fill="#e6e6e6" stroke="none" fontFamily="Lato, sans-serif" fontWeight="300" fontSize="18">
      <text x="68" y="537">Y</text>
      <text x="140" y="611">X</text>
    </g>
  </svg>
);

const tag = (x: number, y: number, w: number, text: string) => (
  <g>
    <rect x={x + 0.5} y={y + 0.5} width={w} height="17" fill="#c9c9e2" stroke="#3a3a78" />
    <text x={x + w / 2} y={y + 13} textAnchor="middle" fontSize="12" fontFamily="Liberation Sans, sans-serif" fill="#2e2e66">{text}</text>
  </g>
);

const ColorPreview = () => (
  <svg width="326" height="188" viewBox="0 0 326 188" fill="none" role="img" aria-label="预览">
    <rect width="326" height="188" fill="#00ff00" />
    <path d="M90.500 0v132M91.500 177v11M223 0L62 188" stroke="#004400" strokeDasharray="2 1.500" />
    <path d="M91.500 131v46M69 153.500h45M88.500 151.500h5v5h-5z" stroke="#003000" strokeWidth="1.200" />
    <path d="M85.500 36.500h10v10h-10zM90.500 36v11M85 41.500h11" stroke="#e07a28" />
    <path d="M96 41.500h27" stroke="#c4e8c0" />
    {tag(70, 97, 46, "10.6063")}
    {tag(118, 155, 45, "28.2280")}
    {tag(166, 155, 39, "6.0884")}
    <g stroke="#6b739c">
      <path d="M238 20h8v9h-8zM238 25l42-20v39zM243 25h37M274 15v19l-12-6M274 15l-12 6M238 20h24M238 29h24" />
      <path d="M279.500 5v39M262.500 13v23" strokeWidth="2" />
      <path d="M292 0c-4 15-4 35 0 50M292 0c8 14 8 36 0 50M292 0v50M290 25h7" />
    </g>
    <g stroke="#1f62d0" strokeWidth="1.200">
      <path d="M222 87l11 22 19-3 11-7-6-12M222 87l18-2 12 21M222 87l20-11 14 4-16 5M228 84l17-5M233 82l18-3M236 79l10-2M235 88l8 20M250 84l8 18" />
      <ellipse cx="255" cy="88" rx="7" ry="11" transform="rotate(-20 255 88)" />
      <ellipse cx="249" cy="90" rx="5" ry="9" transform="rotate(-20 249 90)" />
    </g>
    <path d="M248 90l35-19M252 84v9M248 90h8" stroke="#b08a30" />
  </svg>
);

const Up = () => <svg width="6" height="4" viewBox="0 0 6 4"><path d="M0 4l3-4 3 4z" fill="#444" /></svg>;
const Down = () => <svg width="6" height="4" viewBox="0 0 6 4"><path d="M0 0h6L3 4z" fill="#444" /></svg>;

const OptionsDialog = () => (
  <Dialog $x={370} $y={129} $w={584} role="dialog" aria-label="选项">
    <DialogTitle>
      <Icon name="app" size={14} /><DialogName>选项</DialogName>
      <DarkCaption>
        <CaptionButton $w={26} aria-label="帮助">?</CaptionButton>
        <CaptionButton $w={42} aria-label="关闭">
          <svg width="9" height="8" viewBox="0 0 9 8"><path d="M1 0l7 8M8 0L1 8" stroke="#fff" strokeWidth="2.400" /></svg>
        </CaptionButton>
      </DarkCaption>
    </DialogTitle>
    <DialogBody>
      <ConfigRow>
        <Field $w={94}>当前配置:</Field>
        <Field $w={172}>&lt;&lt;未命名配置&gt;&gt;</Field>
        <Field><Icon name="doc" size={14} /></Field>
        <Field $w={97}>当前图形:</Field>
        <Field>123 - 副本.dwg</Field>
      </ConfigRow>
      <TabStrip>
        <OptionTab $w={60}>建模</OptionTab>
        <OptionTab $w={43}>选择</OptionTab>
        <OptionTab $w={41}>配置</OptionTab>
      </TabStrip>
      <OptionPanel>
        <Group $h={115} $row={25}>
          <GroupLine>圆的平滑度(M)</GroupLine>
          <GroupLine>段线曲线的线段数(V)</GroupLine>
          <GroupLine>象的平滑度(J)</GroupLine>
          <GroupLine>廓素线(O)</GroupLine>
        </Group>
        <Group $h={115} $row={16}>
          <GroupLine $in>平移和缩放(P)</GroupLine>
          <GroupLine>边框(R)</GroupLine>
          <GroupLine>)</GroupLine>
          <GroupLine>(X)</GroupLine>
          <GroupLine>的真实轮廓(W)</GroupLine>
        </Group>
        <SliderGroup $h={37} $row={16}>
          <Slider type="range" aria-label="大小" min={0} max={100} defaultValue={77} />
        </SliderGroup>
      </OptionPanel>
      <Buttons>
        <PushButton $w={66} disabled>应用(A)</PushButton>
        <PushButton $w={66}>帮助(H)</PushButton>
      </Buttons>
    </DialogBody>
  </Dialog>
);

const ColorDialog = () => (
  <Dialog $x={272} $y={173} $w={518} $front role="dialog" aria-label="图形窗口颜色">
    <DialogTitle $front>
      <Haze />
      <Icon name="app" size={14} /><DialogName>图形窗口颜色</DialogName>
      <RedClose aria-label="关闭">
        <svg width="11" height="9" viewBox="0 0 11 9"><path d="M2 1l7 7M9 1L2 8" stroke="#6b3a34" strokeWidth="3.600" /><path d="M2 1l7 7M9 1L2 8" stroke="#fff" strokeWidth="2.400" /></svg>
      </RedClose>
    </DialogTitle>
    <ColorBody>
      <ColorLayout>
        <Column>
          <Lists>
            <Column $w={146}>
              <Label htmlFor="bg">背景(X):</Label>
              <ListFrame>
                <ListBox id="bg" size={7} $h={84} defaultValue="图纸/布局">
                  {backgrounds.map((b) => <option key={b}>{b}</option>)}
                </ListBox>
              </ListFrame>
              <PreviewLabel as="span">预览:</PreviewLabel>
            </Column>
            <Column $w={168}>
              <Label htmlFor="el">界面元素(E):</Label>
              <ListFrame $gap={10}>
                <ListBox id="el" size={12} $h={141} defaultValue="相机轮廓色">
                  {elements.map((b) => <option key={b}>{b}</option>)}
                </ListBox>
                <ScrollBar>
                  <Up />
                  <ScrollThumb><svg width="6" height="8" viewBox="0 0 6 8"><path d="M0 1.500h6M0 4.500h6M0 7.500h6" stroke="#555" /></svg></ScrollThumb>
                  <Down />
                </ScrollBar>
              </ListFrame>
            </Column>
          </Lists>
          <ColorPreview />
        </Column>
        <Column>
          <Label as="span">颜色(C):</Label>
          <Combo w={144} label="颜色" value="51,102,255" mono white><Swatch $c="#3366ff" /></Combo>
          <CheckRow><input type="checkbox" disabled />X,  Y,  Z  的色彩(T)</CheckRow>
          <ResetButtons>
            <PushButton>恢复当前元素(R)</PushButton>
            <PushButton>恢复当前背景(U)</PushButton>
            <PushButton>恢复所有背景(O)</PushButton>
          </ResetButtons>
        </Column>
      </ColorLayout>
      <ColorButtons>
        <PushButton $w={90} $hot>应用并关闭(A)</PushButton>
        <PushButton $w={72}>取消</PushButton>
        <PushButton $w={71}>帮助</PushButton>
      </ColorButtons>
    </ColorBody>
    <Annotations width="290" height="240" viewBox="273 174 290 240" fill="#fb3a34">
      <path d="M349 244l23 9-7 5 36 60-46-54-6 5z" />
      <path d="M499 328l22 13-8 3 25 51-32-46-5 5z" />
    </Annotations>
  </Dialog>
);

const App = () => (
  <>
    <GlobalStyle />
    <Window>
      <TitleBar>
        <GlassSmear />
        <Icon name="app" size={14} />
        <TitleText>AutoCAD 2007 - [C:\Users\Administrator\Desktop\123 - 副本.dwg]</TitleText>
        <Caption>
          <CaptionButton $w={25} aria-label="最小化"><svg width="11" height="5" viewBox="0 0 11 5"><path d="M.5.5h10v3H.5z" fill="#fff" stroke="#555" /></svg></CaptionButton>
          <CaptionButton $w={24} aria-label="还原"><svg width="11" height="9" viewBox="0 0 11 9"><path d="M2 2h7v5H2z" fill="none" stroke="#555" strokeWidth="4" /><path d="M2 2h7v5H2z" fill="none" stroke="#fff" strokeWidth="2" /></svg></CaptionButton>
          <CaptionButton $w={44} aria-label="关闭"><svg width="11" height="9" viewBox="0 0 11 9"><path d="M2 1l7 7M9 1L2 8" stroke="#555" strokeWidth="4" /><path d="M2 1l7 7M9 1L2 8" stroke="#fff" strokeWidth="2.200" /></svg></CaptionButton>
        </Caption>
      </TitleBar>
      <MenuBar>
        <Icon name="doc" size={14} />
        {menus.map((m) => <MenuItem key={m}>{m}</MenuItem>)}
        <MdiGroup>
          <MdiButton aria-label="最小化图形"><svg width="7" height="7" viewBox="0 0 7 7"><path d="M1 6h5" stroke="#7b93ad" strokeWidth="1.500" /></svg></MdiButton>
          <MdiButton aria-label="还原图形"><svg width="9" height="8" viewBox="0 0 9 8"><path d="M3 3V1h5v4H6M1 3.500h5v4H1z" stroke="#7b93ad" fill="none" strokeWidth="1.200" /></svg></MdiButton>
          <MdiButton aria-label="关闭图形"><svg width="7" height="7" viewBox="0 0 7 7"><path d="M1 1l5 5M6 1L1 6" stroke="#7b93ad" strokeWidth="1.700" /></svg></MdiButton>
        </MdiGroup>
      </MenuBar>
      <ToolRows>
        <ToolRow>
          <ToolBar>
            <Grip />
            <Tools names={["fresh", "open", "save", "|", "print", "preview", "publish", "globe", "|", "cut", "copy", "paste", "match", "bedit", "|", "undo", "tiny", "redo", "tiny", "|", "pan", "zoom", "zoomwin", "zoomprev", "|", "props", "dcenter", "palettes", "sheets", "markup", "calc", "|", "help"]} />
          </ToolBar>
          <ToolBar $sep={7}>
            <Grip />
            <Tools names={["textstyle"]} /><Combo w={89} label="文字样式" value="IDQSTYLE" mono />
            <Sep /><Tools names={["dimstyle"]} /><Combo w={89} label="标注样式" value="ISO-25" mono />
            <Sep /><Tools names={["tablestyle"]} /><Combo w={89} label="表格样式" value="Standard" mono />
          </ToolBar>
        </ToolRow>
        <ToolRow>
          <ToolBar $sep={5}>
            <Grip />
            <Tools names={["dlinear", "daligned", "darc", "dord", "|", "dradius", "djog", "ddia", "dang", "|", "quick", "baseline", "cont", "|", "leader", "tol", "center", "|", "dedit", "dtedit", "dupd", "|"]} />
            <Combo w={89} label="当前标注样式" value="ISO-25" mono />
            <Tools names={["dimstyle"]} />
          </ToolBar>
        </ToolRow>
        <ToolRow>
          <ToolBar>
            <Grip />
            <Combo w={156} label="工作空间" value="AutoCAD 经典" />
            <Tools names={["gear", "home"]} />
          </ToolBar>
          <ToolBar>
            <Grip />
            <Tools names={["layers"]} />
            <Combo w={270} label="图层" value="0" mono>
              <Icon name="bulb" size={15} /><Icon name="sun" size={15} /><Icon name="snow" size={15} /><Icon name="unlock" size={15} />
              <Swatch $c="#fff" />
            </Combo>
            <Tools names={["laycur", "layprev"]} />
          </ToolBar>
          <ToolBar $sep={5}>
            <Grip />
            <Combo w={136} label="颜色控制" value="ByLayer" mono><Swatch $c="#fff" /></Combo>
            <Sep /><Combo w={145} label="线型控制" value="ByLayer" mono><LinePreview $w={54} /></Combo>
            <Sep /><Combo w={112} label="线宽控制" value="ByLayer" mono><LinePreview $w={32} /></Combo>
            <Sep />
          </ToolBar>
        </ToolRow>
      </ToolRows>
      <Body>
        <SideBar>
          <ToolColumn><Grip $flat /><Tools names={leftTools} /></ToolColumn>
          <ToolColumn><Grip $flat /><Tools names={editTools} /></ToolColumn>
        </SideBar>
        <Workspace>
          <Canvas><CadDrawing /></Canvas>
          <LayoutTabs>
            {["M5 1v8M12 1v8L7 5z", "M11 1v8L6 5z", "M6 1v8l5-4z", "M12 1v8M5 1v8l5-4z"].map((d) => (
              <NavButton key={d} aria-label="布局导航"><svg width="16" height="10" viewBox="0 0 16 10"><path d={d} fill="#000" stroke="#000" /></svg></NavButton>
            ))}
            <TabShape $on><span>模型</span></TabShape>
            <TabShape><span>布局1</span></TabShape>
            <TabShape><span>布局2</span></TabShape>
          </LayoutTabs>
        </Workspace>
        <SideBar>
          <ToolColumn><Grip $flat /><Tools names={["front1", "front2", "front3", "front4"]} /></ToolColumn>
        </SideBar>
      </Body>
      <CommandPanel>
        <Grip />
        <CommandBox>
          <CommandHistory>命令:<ScrollPair><Up /><Down /></ScrollPair></CommandHistory>
          <InputRow>
            <CommandInput aria-label="命令行" />
            <ScrollEnd aria-label="向右滚动"><svg width="5" height="6" viewBox="0 0 5 6"><path d="M0 0l4 3-4 3z" fill="#333" /></svg></ScrollEnd>
          </InputRow>
        </CommandBox>
      </CommandPanel>
      <StatusBar>
        <Coords>27081.1290, 5972.0966, 0.0000</Coords>
        <Toggle>捕捉</Toggle><Toggle>栅格</Toggle><Toggle>正交</Toggle><Toggle>极轴</Toggle>
        <Toggle $on>对象捕捉</Toggle><Toggle $on>对象追踪</Toggle>
        <ModeToggle>DUCS</ModeToggle><ModeToggle>DYN</ModeToggle>
        <Toggle>线宽</Toggle><Toggle $on>模型</Toggle>
        <Tray><Icon name="warn" /><Icon name="lock" /><Icon name="plot" /><Icon name="xref" /></Tray>
        <StatusEnd>
          <ToolButton $w={14} aria-label="状态栏菜单"><Down /></ToolButton>
          <ToolButton $w={20} aria-label="全屏显示"><Icon name="square" size={15} /></ToolButton>
          <svg width="9" height="9" viewBox="0 0 9 9"><path d="M7 0h2v2H7zM7 3h2v2H7zM4 3h2v2H4zM7 6h2v2H7zM4 6h2v2H4zM1 6h2v2H1z" fill="#b5b5b5" /></svg>
        </StatusEnd>
      </StatusBar>
      <OptionsDialog />
      <ColorDialog />
      <Balloon>
        <BalloonHead>
          <Icon name="info" size={13} />完成打印和作业发布
          <CloseNote aria-label="关闭通知"><svg width="9" height="9" viewBox="0 0 9 9"><path d="M1 1l7 7M8 1L1 8" stroke="#000" strokeWidth="2" /></svg></CloseNote>
        </BalloonHead>
        <BalloonText>未找到错误或警告</BalloonText>
        <BalloonText><a href="#details">单击以查看打印和发布详细信息...</a></BalloonText>
        <Tail width="18" height="20" viewBox="0 0 18 20"><path d="M1 1l14 18V1" fill="#ffffe1" /><path d="M1 2l14 17V2" fill="none" stroke="#000" /></Tail>
      </Balloon>
      <Watermark width="186" height="90" viewBox="0 0 186 90" fill="#ffffff" fillOpacity=".72" stroke="#8c8c80" strokeOpacity=".4" strokeWidth="1" fontFamily="Liberation Sans, Noto Sans CJK SC, sans-serif">
        <text x="0" y="57" fontSize="38" fontWeight="700">Bai</text>
        <text x="115" y="55" fontSize="30" fontWeight="700">经验</text>
        <text x="1" y="80" fontSize="21">jingyan.baidu.com</text>
        <ellipse cx="81" cy="11" rx="6" ry="8" /><ellipse cx="97" cy="12" rx="6" ry="8" />
        <ellipse cx="70" cy="25" rx="5" ry="7" /><ellipse cx="109" cy="26" rx="5" ry="7" />
        <path d="M89 23c7 0 9 7 14 12 6 6 8 20-4 21-6 0-14 0-20 0-12-1-11-14-5-20 5-6 8-13 15-13z" />
        <text x="77" y="52" fontSize="18" fontWeight="700" fill="#c4c49c" stroke="none">du</text>
      </Watermark>
    </Window>
  </>
);

export default App;
